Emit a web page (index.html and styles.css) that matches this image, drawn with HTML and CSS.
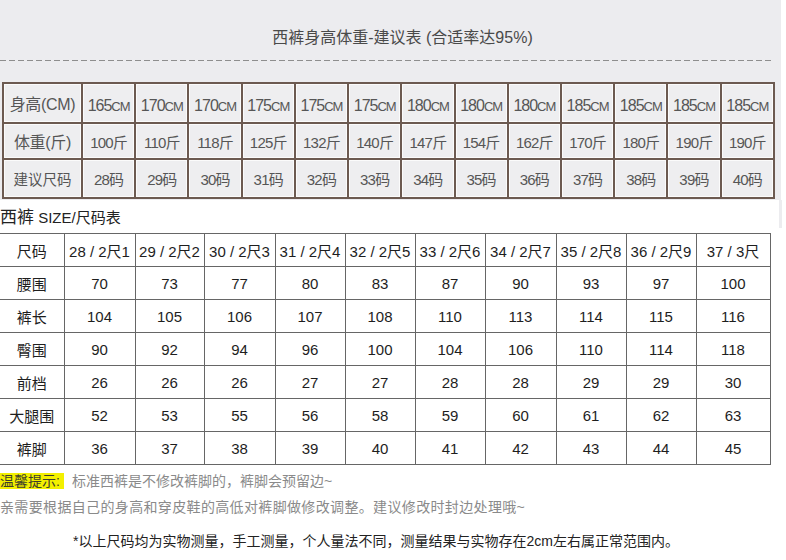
FILE: index.html
```html
<!DOCTYPE html>
<html lang="zh-CN">
<head>
<meta charset="utf-8">
<title>西裤尺码表</title>
<link rel="stylesheet" href="styles.css">
</head>
<body>
<div class="top">
  <h1 class="title">西裤身高体重-建议表 (合适率达95%)</h1>
  <div class="dash"></div>
  <table class="fit">
    <colgroup><col class="c-label"><col span="13" class="c-data"></colgroup>
    <tr class="r1">
      <td class="lab">身高(CM)</td>
      <td>165<small>CM</small></td><td>170<small>CM</small></td><td>170<small>CM</small></td><td>175<small>CM</small></td><td>175<small>CM</small></td><td>175<small>CM</small></td><td>180<small>CM</small></td><td>180<small>CM</small></td><td>180<small>CM</small></td><td>185<small>CM</small></td><td>185<small>CM</small></td><td>185<small>CM</small></td><td>185<small>CM</small></td>
    </tr>
    <tr class="r2">
      <td class="lab">体重(斤)</td>
      <td>100斤</td><td>110斤</td><td>118斤</td><td>125斤</td><td>132斤</td><td>140斤</td><td>147斤</td><td>154斤</td><td>162斤</td><td>170斤</td><td>180斤</td><td>190斤</td><td>190斤</td>
    </tr>
    <tr class="r3">
      <td class="lab">建议尺码</td>
      <td>28码</td><td>29码</td><td>30码</td><td>31码</td><td>32码</td><td>33码</td><td>34码</td><td>35码</td><td>36码</td><td>37码</td><td>38码</td><td>39码</td><td>40码</td>
    </tr>
  </table>
</div>

<div class="head-row">
  <h2 class="size-title"><span class="big">西裤</span> SIZE/尺码表</h2>
  <div class="strip"></div>
</div>

<table class="size">
  <colgroup>
    <col style="width:64px"><col style="width:71px"><col style="width:69px"><col style="width:71px"><col style="width:70px"><col style="width:70px"><col style="width:70px"><col style="width:71px"><col style="width:70px"><col style="width:70px"><col style="width:74px">
  </colgroup>
  <tr><td>尺码</td><td>28 / 2尺1</td><td>29 / 2尺2</td><td>30 / 2尺3</td><td>31 / 2尺4</td><td>32 / 2尺5</td><td>33 / 2尺6</td><td>34 / 2尺7</td><td>35 / 2尺8</td><td>36 / 2尺9</td><td>37 / 3尺</td></tr>
  <tr><td>腰围</td><td>70</td><td>73</td><td>77</td><td>80</td><td>83</td><td>87</td><td>90</td><td>93</td><td>97</td><td>100</td></tr>
  <tr><td>裤长</td><td>104</td><td>105</td><td>106</td><td>107</td><td>108</td><td>110</td><td>113</td><td>114</td><td>115</td><td>116</td></tr>
  <tr><td>臀围</td><td>90</td><td>92</td><td>94</td><td>96</td><td>100</td><td>104</td><td>106</td><td>110</td><td>114</td><td>118</td></tr>
  <tr><td>前档</td><td>26</td><td>26</td><td>26</td><td>27</td><td>27</td><td>28</td><td>28</td><td>29</td><td>29</td><td>30</td></tr>
  <tr><td>大腿围</td><td>52</td><td>53</td><td>55</td><td>56</td><td>58</td><td>59</td><td>60</td><td>61</td><td>62</td><td>63</td></tr>
  <tr><td>裤脚</td><td>36</td><td>37</td><td>38</td><td>39</td><td>40</td><td>41</td><td>42</td><td>43</td><td>44</td><td>45</td></tr>
</table>

<div class="notes">
  <p class="tip"><span class="hl">温馨提示:</span><span class="muted">标准西裤是不修改裤脚的，裤脚会预留边~</span></p>
  <p class="muted wide">亲需要根据自己的身高和穿皮鞋的高低对裤脚做修改调整。建议修改时封边处理哦~</p>
  <p class="foot">*以上尺码均为实物测量，手工测量，个人量法不同，测量结果与实物存在2cm左右属正常范围内。</p>
</div>
</body>
</html>
```

FILE: styles.css
```css
html, body {
  margin: 0;
  padding: 0;
  background: #ffffff;
}
body {
  width: 786px;
  font-family: "Liberation Sans", "Noto Sans CJK SC", sans-serif;
  color: #222;
}

/* ---------- top recommendation panel ---------- */
.top {
  width: 781px;
  height: 200px;
  background: #ececef;
  overflow: hidden;
}
.title {
  margin: 0;
  padding: 28px 0 0 24px;
  font-size: 16px;
  line-height: 20px;
  font-weight: normal;
  color: #4a4a4a;
  text-align: center;
}
.dash {
  margin-top: 12px;
  width: 774px;
  height: 1px;
  background: repeating-linear-gradient(to right, #8e8e8e 0 6px, transparent 6px 9px);
}
.fit {
  margin: 21px 0 0 2px;
  width: 773px;
  border-collapse: collapse;
  table-layout: fixed;
  color: #565656;
}
.fit .c-label { width: 79px; }
.fit td {
  border: 2px solid #6c5a51;
  padding: 0;
  text-align: center;
  white-space: nowrap;
  box-shadow: inset 0 0 0 1px rgba(255, 255, 255, 0.75);
  background: #eeeef0;
  font-size: 15px;
  letter-spacing: -0.8px;
}
.fit .r1 td { height: 32px; font-size: 16px; letter-spacing: -1px; padding-top: 6px; }
.fit .r2 td { height: 34px; }
.fit .r3 td { height: 37px; }
.fit small {
  font-size: 13px;
  letter-spacing: -1px;
}
.fit td.lab {
  font-size: 16px;
  letter-spacing: -0.3px;
}
.fit .r1 td.lab { height: 38px; padding-top: 0; }
.fit .r3 td.lab { font-size: 14.5px; letter-spacing: 0; }

/* ---------- size table ---------- */
.head-row {
  display: flex;
  height: 33px;
}
.size-title {
  margin: 0;
  width: 779px;
  padding-top: 8px;
  font-size: 15px;
  line-height: 20px;
  font-weight: normal;
  color: #222;
}
.size-title .big {
  font-size: 17px;
}
.strip {
  width: 3px;
  height: 28px;
  background: #ececef;
}

.size {
  width: 770px;
  border-collapse: collapse;
  table-layout: fixed;
}
.size td {
  height: 32px;
  padding: 0;
  border: 1px solid #666;
  text-align: center;
  font-size: 15px;
  color: #1e1e1e;
  white-space: nowrap;
}
.size td:first-child { border-left: 0; }

/* ---------- notes ---------- */
.notes {
  padding-top: 5px;
  font-size: 14px;
}
.notes p {
  margin: 0;
  line-height: 22px;
}
.hl {
  background: #f3f000;
  color: #3e3e2a;
  padding-right: 4px;
  margin-right: 8px;
}
.muted { color: #8a8a8a; }
.wide {
  margin-top: 4px !important;
  letter-spacing: 0.35px;
}
.foot {
  margin-top: 12px !important;
  padding-left: 73px;
  color: #222;
}
```
